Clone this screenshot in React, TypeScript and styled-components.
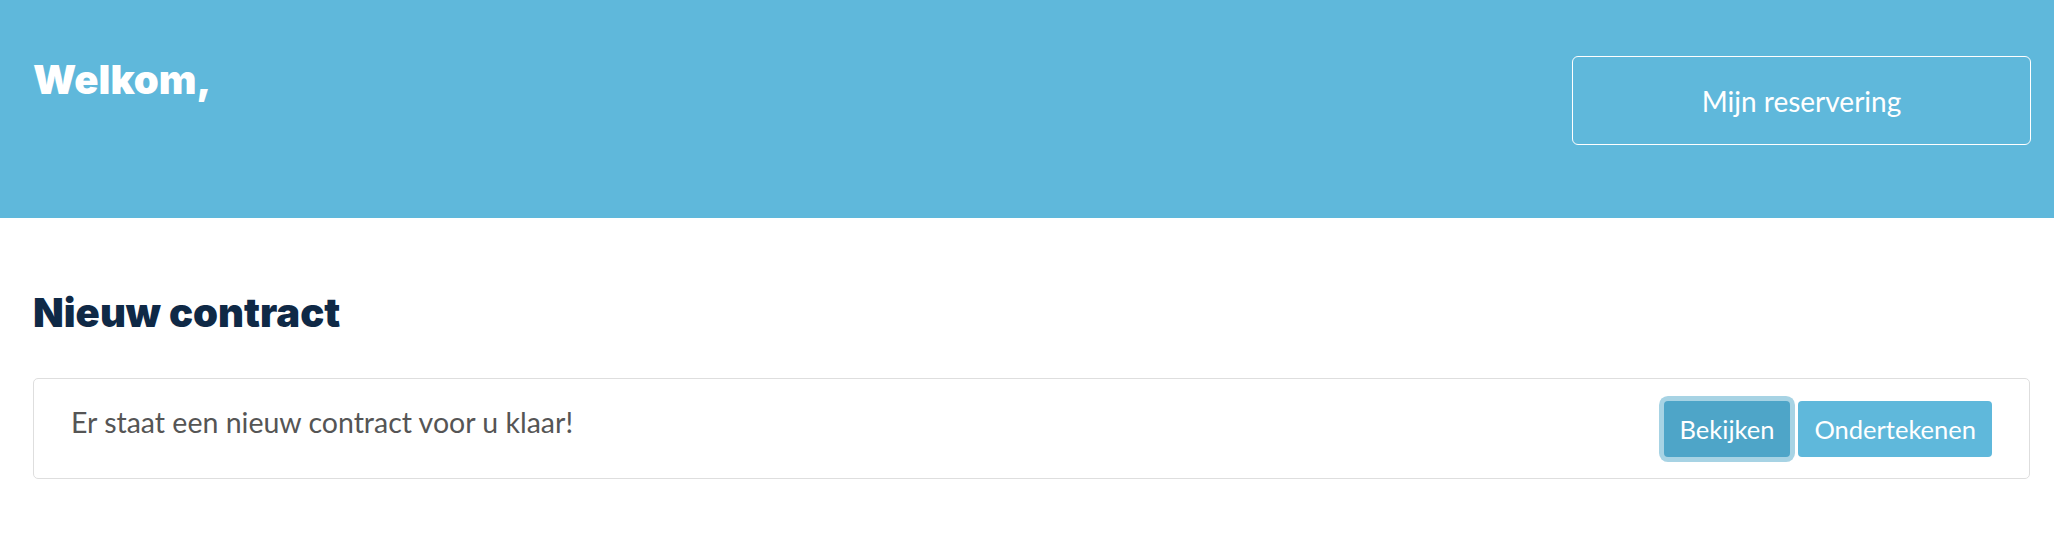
import React from "react";
import styled, { createGlobalStyle } from "styled-components";

const Global = createGlobalStyle`
  html, body { margin: 0; padding: 0; background: #fff; }
  body { font-family: Lato, "Open Sans", sans-serif; }
  * { box-sizing: border-box; }
`;

const Header = styled.header`
  background: #5fb8db;
  height: 218px;
  display: flex;
  justify-content: space-between;
  align-items: flex-start;
  padding: 56px 23px 0 33px;
`;

const Welcome = styled.h1`
  margin: 0;
  color: #fff;
  font-family: Inter, Lato, sans-serif;
  font-weight: 900;
  font-size: 40px;
  line-height: 48px;
  letter-spacing: 0;
`;

const OutlineButton = styled.button`
  width: 459px;
  height: 89px;
  background: transparent;
  border: 1px solid #fff;
  border-radius: 6px;
  color: #fff;
  font-family: Lato, sans-serif;
  font-size: 28px;
  font-weight: 400;
  cursor: pointer;
`;

const Main = styled.main`
  padding: 71px 24px 0 33px;
`;

const SectionTitle = styled.h2`
  margin: 0 0 41px;
  color: #0f2946;
  font-family: Inter, Lato, sans-serif;
  font-weight: 900;
  font-size: 40px;
  line-height: 48px;
  letter-spacing: 0;
`;

const Card = styled.div`
  height: 101px;
  border: 1px solid #dedede;
  border-radius: 5px;
  display: flex;
  justify-content: space-between;
  align-items: center;
  padding: 0 37px 0 37px;
`;

const Message = styled.p`
  margin: 0;
  align-self: flex-start;
  padding-top: 26px;
  color: #555;
  font-family: Lato, sans-serif;
  font-size: 28.5px;
  line-height: 34px;
`;

const Actions = styled.div`
  display: flex;
  gap: 8px;
`;

const ActionButton = styled.button<{ $focused?: boolean }>`
  height: 56px;
  padding: 0 16px;
  border: none;
  border-radius: 4px;
  background: ${(p) => (p.$focused ? "#4ea5c8" : "#5fb8db")};
  box-shadow: ${(p) => (p.$focused ? "0 0 0 5px #a7d3e4" : "none")};
  color: #fff;
  font-family: Lato, sans-serif;
  font-size: 25.5px;
  cursor: pointer;
`;

export default function App() {
  return (
    <>
      <Global />
      <Header>
        <Welcome>Welkom,</Welcome>
        <OutlineButton>Mijn reservering</OutlineButton>
      </Header>
      <Main>
        <SectionTitle>Nieuw contract</SectionTitle>
        <Card>
          <Message>Er staat een nieuw contract voor u klaar!</Message>
          <Actions>
            <ActionButton $focused>Bekijken</ActionButton>
            <ActionButton>Ondertekenen</ActionButton>
          </Actions>
        </Card>
      </Main>
    </>
  );
}
